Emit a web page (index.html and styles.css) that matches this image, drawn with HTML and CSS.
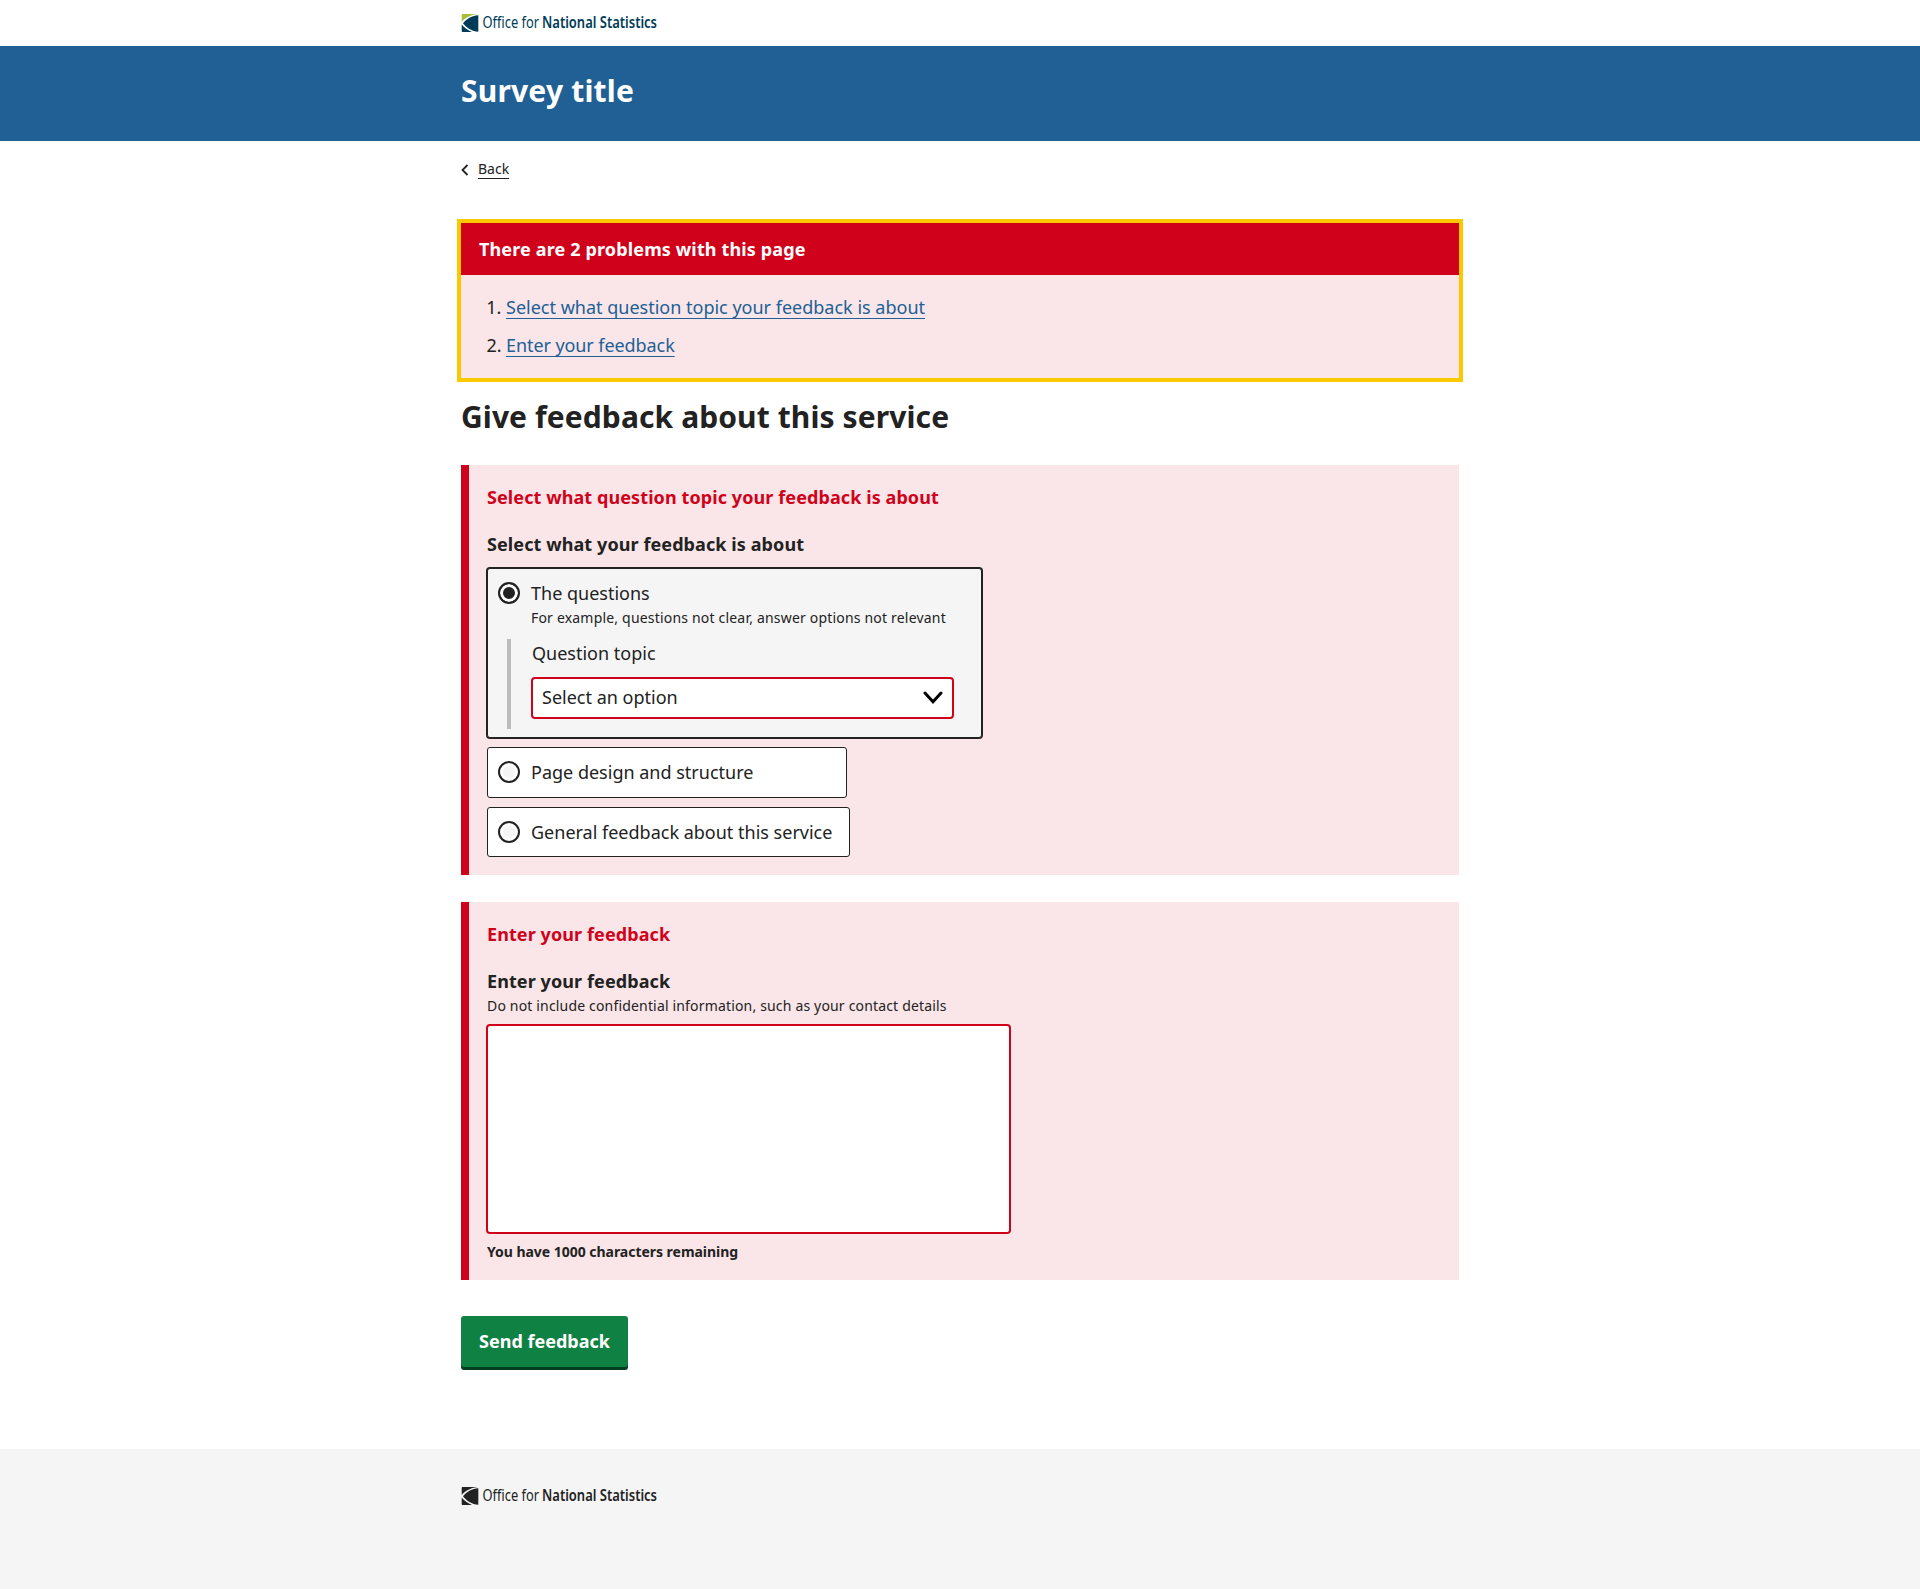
FILE: index.html
```html
<!DOCTYPE html>
<html lang="en">
<head>
<meta charset="utf-8">
<title>Give feedback about this service</title>
<link rel="stylesheet" href="styles.css">
</head>
<body>
<header>
  <div class="brand"><div class="container">
    <svg class="logo" width="197" height="19" viewBox="0 0 197 19" role="img" aria-label="Office for National Statistics">
      <path class="logo-accent" d="M1.500 0H16.500C9 1 4 4 .7 8V1Q.7 0 1.500 0Z"/>
      <path class="logo-mark" d="M.7 10.500C3 13.500 7 16.500 11 18H1.500Q.7 18 .7 17Z"/>
      <path class="logo-mark" d="M17.300 1.300V17.800C11 17.500 5 13.500 2 9.300C6 4.500 11 1.600 17.300 1.300Z"/>
      <text class="logo-light" x="21.500" y="14" textLength="56.500" lengthAdjust="spacingAndGlyphs">Office for</text>
      <text class="logo-bold" x="81" y="14" textLength="115" lengthAdjust="spacingAndGlyphs">National Statistics</text>
    </svg>
  </div></div>
  <div class="masthead"><div class="container"><div class="service-title">Survey title</div></div></div>
</header>
<div class="container">
  <nav class="breadcrumb">
    <svg width="8" height="12" viewBox="0 0 8 12"><path d="M6.500 1L1.500 6L6.500 11"/></svg>
    <a href="#">Back</a>
  </nav>
  <main>
    <section class="summary">
      <h2 class="summary-title">There are 2 problems with this page</h2>
      <ol class="summary-list">
        <li><a href="#topic">Select what question topic your feedback is about</a></li>
        <li class="tight"><a href="#feedback">Enter your feedback</a></li>
      </ol>
    </section>
    <h1>Give feedback about this service</h1>
    <section class="panel panel-topic">
      <p class="error">Select what question topic your feedback is about</p>
      <p class="legend">Select what your feedback is about</p>
      <div class="options">
        <div class="option option-selected">
          <div class="choice"><span class="radio radio-on"></span><span>The questions</span></div>
          <p class="hint option-hint">For example, questions not clear, answer options not relevant</p>
          <div class="nested">
            <p class="nested-label">Question topic</p>
            <div class="select" id="topic" tabindex="0">
              <span>Select an option</span>
              <svg width="20" height="14" viewBox="0 0 20 14"><path d="M2 2L10 10.800L18 2"/></svg>
            </div>
          </div>
        </div>
        <div class="option"><div class="choice"><span class="radio"></span><span>Page design and structure</span></div></div>
        <div class="option option-last"><div class="choice"><span class="radio"></span><span>General feedback about this service</span></div></div>
      </div>
    </section>
    <section class="panel panel-comment">
      <p class="error">Enter your feedback</p>
      <p class="legend">Enter your feedback</p>
      <p class="hint">Do not include confidential information, such as your contact details</p>
      <textarea id="feedback"></textarea>
      <p class="remaining">You have 1000 characters remaining</p>
    </section>
    <button class="submit" type="button">Send feedback</button>
  </main>
</div>
<footer><div class="container">
  <svg class="logo logo-mono" width="197" height="19" viewBox="0 0 197 19" role="img" aria-label="Office for National Statistics">
    <path class="logo-accent" d="M1.500 0H16.500C9 1 4 4 .7 8V1Q.7 0 1.500 0Z"/>
    <path class="logo-mark" d="M.7 10.500C3 13.500 7 16.500 11 18H1.500Q.7 18 .7 17Z"/>
    <path class="logo-mark" d="M17.300 1.300V17.800C11 17.500 5 13.500 2 9.300C6 4.500 11 1.600 17.300 1.300Z"/>
    <text class="logo-light" x="21.500" y="14" textLength="56.500" lengthAdjust="spacingAndGlyphs">Office for</text>
    <text class="logo-bold" x="81" y="14" textLength="115" lengthAdjust="spacingAndGlyphs">National Statistics</text>
  </svg>
</div></footer>
</body>
</html>
```
FILE: styles.css
```css
* { box-sizing: border-box; }
body {
  margin: 0;
  min-height: 1589px;
  display: flex;
  flex-direction: column;
  background: #fff;
  color: #222;
  font: 18px/28px "Noto Sans", sans-serif;
}
p, h1, h2, ol { margin: 0; }
.container { width: 998px; margin: 0 auto; }
.brand { height: 46px; padding-top: 14px; }
.logo { display: block; overflow: visible; fill: #003c57; font-family: "Noto Sans", sans-serif; font-size: 15.5px; }
.logo-accent { fill: #a8bd3a; }
.logo-light { font-weight: 400; }
.logo-bold { font-weight: 600; }
.logo-mono, .logo-mono .logo-accent { fill: #222; }
.masthead { height: 95px; padding-top: 25px; background: #206095; color: #fff; }
.service-title { font-size: 30px; line-height: 40px; font-weight: 700; letter-spacing: .2px; }
.breadcrumb { display: flex; align-items: center; gap: 9px; height: 20px; margin-top: 18px; font-size: 14px; line-height: 20px; }
.breadcrumb svg { fill: none; stroke: #222; stroke-width: 1.8; margin-top: 2px; }
.breadcrumb a { color: #222; text-decoration: underline; text-underline-offset: 4px; text-decoration-thickness: 1px; text-decoration-skip-ink: none; }
.summary { margin-top: 44px; height: 155px; background: #fae6e8; outline: 4px solid #fbc900; }
.summary-title { height: 52px; padding: 12px 18px; background: #d0021b; color: #fff; font-size: 18px; line-height: 28px; letter-spacing: .14px; }
.summary-list { padding: 18px 0 0 45px; }
.summary-list li { height: 28px; margin-bottom: 10px; }
.summary-list .tight { letter-spacing: -.08px; }
.summary-list a { color: #206095; text-decoration: underline; text-underline-offset: 4px; text-decoration-thickness: 1px; text-decoration-skip-ink: none; }
h1 { margin-top: 19px; font-size: 30px; line-height: 40px; letter-spacing: .1px; }
.panel { border-left: 8px solid #d0021b; background: #fae6e8; padding: 18px; }
.panel-topic { margin-top: 28px; height: 410px; }
.panel-comment { margin-top: 27px; height: 378px; }
.error { color: #d0021b; font-weight: 700; letter-spacing: .09px; }
.legend { margin-top: 19px; font-weight: 700; letter-spacing: .09px; }
.options { display: flex; flex-direction: column; align-items: flex-start; gap: 9px; margin-top: 10px; }
.option { width: 360px; height: 51px; padding: 10px; border: 1px solid #222; border-radius: 3px; background: #fff; }
.option-last { width: 363px; height: 50px; }
.option-selected { width: 495px; height: 170px; background: #f5f5f5; box-shadow: 0 0 0 1px #222; }
.choice { display: flex; align-items: center; gap: 11px; white-space: nowrap; }
.radio { width: 22px; height: 22px; border: 2px solid #222; border-radius: 50%; background: #f5f5f5; box-shadow: inset 0 0 0 3px #fff; }
.radio-on { background: #222; }
.hint { font-size: 14px; line-height: 21px; letter-spacing: .17px; }
.option-hint { margin: 0 0 0 33px; letter-spacing: .19px; white-space: nowrap; }
.nested { margin: 11px 0 0 9px; width: 448px; height: 90px; border-left: 4px solid #bcbcbc; padding-left: 20px; }
.nested-label { padding-left: 1px; }
.select { display: flex; align-items: center; justify-content: space-between; width: 423px; height: 42px; margin-top: 10px; padding: 0 9px; border: 2px solid #d0021b; border-radius: 4px; background: #fff; }
.select span { padding-bottom: 2px; }
.select svg { fill: none; stroke: #000; stroke-width: 3; stroke-linecap: round; }
textarea { display: block; width: 525px; height: 210px; margin: 8px 0 0 -1px; border: 2px solid #d0021b; border-radius: 4px; background: #fff; resize: none; }
.remaining { margin-top: 6px; font-size: 14px; line-height: 24px; font-weight: 700; letter-spacing: -.03px; }
.submit { display: block; margin: 36px 0 0; width: 167px; height: 51px; padding: 0 0 2px; border: 0; border-radius: 3px; background: #0f8243; box-shadow: 0 3px #073d20; color: #fff; font: 700 18px/28px "Noto Sans", sans-serif; }
footer { margin-top: 82px; flex: 1; padding-top: 38px; background: #f5f5f5; }
```
